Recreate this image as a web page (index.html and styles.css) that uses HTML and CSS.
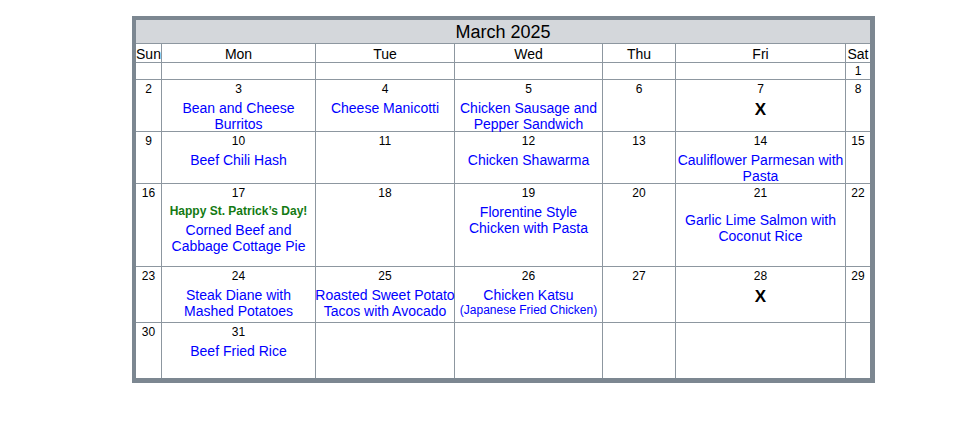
FILE: index.html
```html
<!DOCTYPE html>
<html lang="en">
<head>
<meta charset="utf-8">
<title>March 2025</title>
<link rel="stylesheet" href="styles.css">
</head>
<body>
<div class="cal">
  <div class="title">March 2025</div>
  <div class="hd">Sun</div><div class="hd">Mon</div><div class="hd">Tue</div><div class="hd">Wed</div><div class="hd">Thu</div><div class="hd">Fri</div><div class="hd">Sat</div>

  <div class="c"></div><div class="c"></div><div class="c"></div><div class="c"></div><div class="c"></div><div class="c"></div><div class="c c-first"><div class="n">1</div></div>

  <div class="c"><div class="n">2</div></div>
  <div class="c"><div class="n">3</div><div class="m">Bean and Cheese<br>Burritos</div></div>
  <div class="c"><div class="n">4</div><div class="m">Cheese Manicotti</div></div>
  <div class="c"><div class="n">5</div><div class="m">Chicken Sausage and<br>Pepper Sandwich</div></div>
  <div class="c"><div class="n">6</div></div>
  <div class="c"><div class="n">7</div><div class="x">X</div></div>
  <div class="c"><div class="n">8</div></div>

  <div class="c"><div class="n">9</div></div>
  <div class="c"><div class="n">10</div><div class="m">Beef Chili Hash</div></div>
  <div class="c"><div class="n">11</div></div>
  <div class="c"><div class="n">12</div><div class="m">Chicken Shawarma</div></div>
  <div class="c"><div class="n">13</div></div>
  <div class="c"><div class="n">14</div><div class="m">Cauliflower Parmesan with<br>Pasta</div></div>
  <div class="c"><div class="n">15</div></div>

  <div class="c"><div class="n">16</div></div>
  <div class="c"><div class="n">17</div><div class="holiday">Happy St. Patrick’s Day!</div><div class="m">Corned Beef and<br>Cabbage Cottage Pie</div></div>
  <div class="c"><div class="n">18</div></div>
  <div class="c"><div class="n">19</div><div class="m">Florentine Style<br>Chicken with Pasta</div></div>
  <div class="c"><div class="n">20</div></div>
  <div class="c"><div class="n">21</div><div class="m m-low">Garlic Lime Salmon with<br>Coconut Rice</div></div>
  <div class="c"><div class="n">22</div></div>

  <div class="c"><div class="n">23</div></div>
  <div class="c"><div class="n">24</div><div class="m">Steak Diane with<br>Mashed Potatoes</div></div>
  <div class="c"><div class="n">25</div><div class="m">Roasted Sweet Potato<br>Tacos with Avocado</div></div>
  <div class="c"><div class="n">26</div><div class="m">Chicken Katsu</div><div class="sub">(Japanese Fried Chicken)</div></div>
  <div class="c"><div class="n">27</div></div>
  <div class="c"><div class="n">28</div><div class="x">X</div></div>
  <div class="c"><div class="n">29</div></div>

  <div class="c"><div class="n">30</div></div>
  <div class="c"><div class="n">31</div><div class="m">Beef Fried Rice</div></div>
  <div class="c"></div><div class="c"></div><div class="c"></div><div class="c"></div><div class="c"></div>
</div>
</body>
</html>
```

FILE: styles.css
```css
html, body {
  margin: 0;
  padding: 0;
  background: #ffffff;
}

body {
  font-family: "Liberation Sans", Arial, sans-serif;
  color: #000;
}

.cal {
  margin: 16px 0 0 132px;
  width: 734px;
  border-style: solid;
  border-color: #7c8791;
  border-width: 4px 5px 5px 4px;
  background: #8d97a0;
  display: grid;
  grid-template-columns: 25px 153px 138px 147px 72px 169px 24px;
  grid-template-rows: 23px 18px 16px 51px 51px 82px 55px 55px;
  gap: 1px;
}

.title {
  grid-column: 1 / -1;
  background: #d4d7db;
  font-size: 18px;
  line-height: 21px;
  padding-top: 2px;
  text-align: center;
}

.hd {
  background: #fff;
  font-size: 14px;
  line-height: 16px;
  padding-top: 2px;
  white-space: nowrap;
  display: flex;
  justify-content: center;
}

.c {
  background: #fff;
  text-align: center;
  padding-top: 2px;
  white-space: nowrap;
  display: flex;
  flex-direction: column;
  align-items: center;
}

.c-first {
  padding-top: 1px;
}

.n {
  font-size: 12px;
  line-height: 14px;
}

.m {
  font-size: 14px;
  line-height: 16px;
  color: #0000ff;
  margin-top: 4px;
}

.m-low {
  margin-top: 12px;
}

.holiday {
  font-size: 12px;
  line-height: 14px;
  font-weight: bold;
  color: #137a13;
  margin-top: 4px;
}

.sub {
  font-size: 12px;
  line-height: 14px;
  color: #0000ff;
}

.x {
  font-size: 17px;
  line-height: 18px;
  font-weight: bold;
  margin-top: 5px;
}
```
